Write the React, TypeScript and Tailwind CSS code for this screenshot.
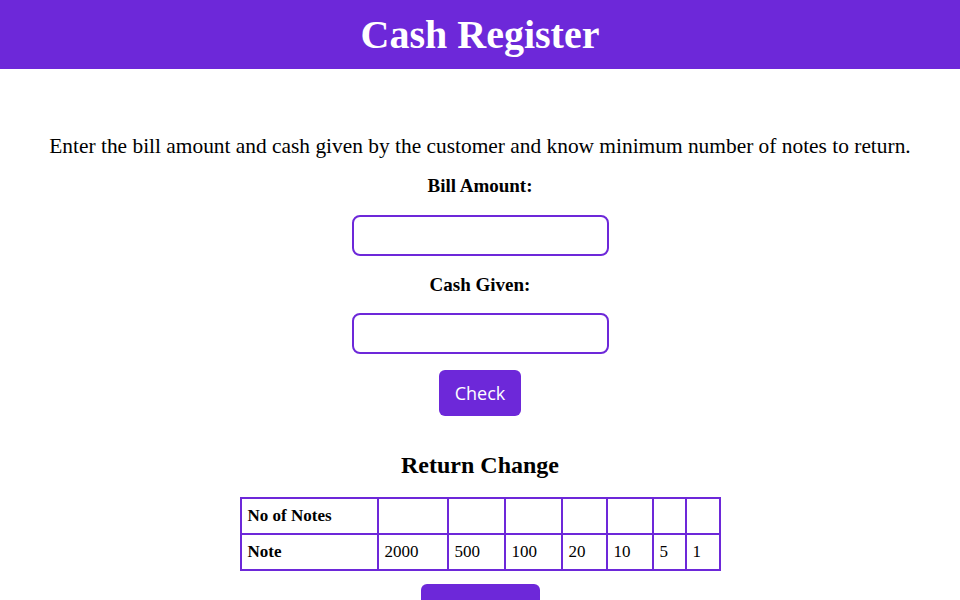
const notes = ['2000', '500', '100', '20', '10', '5', '1'];
const colW = ['w-[70px]', 'w-[57px]', 'w-[57px]', 'w-[45px]', 'w-[46px]', 'w-[33px]', 'w-[34px]'];

export default function App() {
  return (
    <div className="min-h-screen bg-white text-black font-['Liberation_Serif',serif]">
      {/* Header */}
      <header className="h-[69px] bg-[#6d28d9] flex items-center justify-center">
        <h1 className="text-[40px] font-bold text-white leading-none">Cash Register</h1>
      </header>

      <main className="flex flex-col items-center">
        <p className="mt-[65px] text-[21.4px] leading-[24px]">
          Enter the bill amount and cash given by the customer and know minimum number of notes to return.
        </p>

        <label className="mt-[16px] text-[19px] font-bold leading-[24px]">Bill Amount:</label>
        <input className="mt-[17px] w-[257px] h-[41px] rounded-[8px] border-2 border-[#6d28d9] outline-none px-2" />

        <label className="mt-[17px] text-[19px] font-bold leading-[24px]">Cash Given:</label>
        <input className="mt-[16px] w-[257px] h-[41px] rounded-[8px] border-2 border-[#6d28d9] outline-none px-2" />

        <button className="mt-[16px] w-[82px] h-[46px] rounded-[6px] bg-[#6d28d9] text-white text-[18px] font-['Open_Sans',sans-serif]">
          Check
        </button>

        <h2 className="mt-[34px] text-[24px] font-bold leading-[30px]">Return Change</h2>

        <table className="mt-[17px] table-fixed w-[480px] border-collapse border-2 border-[#6d28d9] text-[17px]">
          <tbody>
            <tr className="h-[36px]">
              <th className="w-[137px] border-2 border-[#6d28d9] text-left font-bold px-[6px]">No of Notes</th>
              {notes.map((n, i) => (
                <td key={n} className={`${colW[i]} border-2 border-[#6d28d9] px-[6px]`}></td>
              ))}
            </tr>
            <tr className="h-[36px]">
              <th className="border-2 border-[#6d28d9] text-left font-bold px-[6px]">Note</th>
              {notes.map((n) => (
                <td key={n} className="border-2 border-[#6d28d9] px-[6px]">{n}</td>
              ))}
            </tr>
          </tbody>
        </table>

        <button className="mt-[13px] w-[119px] h-[46px] rounded-[6px] bg-[#6d28d9] text-white text-[18px] font-['Open_Sans',sans-serif]">
          Reset
        </button>
      </main>
    </div>
  );
}
